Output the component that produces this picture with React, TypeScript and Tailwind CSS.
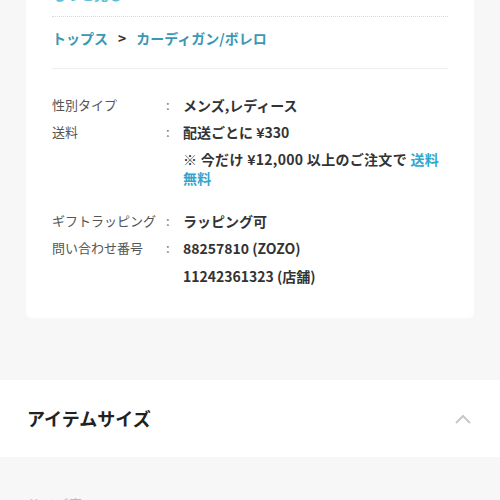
import React from "react";

const font = { fontFamily: '"Noto Sans CJK JP", "Noto Sans", sans-serif' };

function Row({ label, children, className = "" }: { label: string; children: React.ReactNode; className?: string }) {
  return (
    <div className={`flex ${className}`}>
      <div className="w-[114px] shrink-0 text-[13px] leading-[20px] text-[#555]">{label}</div>
      <div className="w-[17px] shrink-0 text-[13px] leading-[20px] text-[#777]">:</div>
      <div className="flex-1 text-[14px] font-bold leading-[20px] text-[#333]">{children}</div>
    </div>
  );
}

export default function App() {
  return (
    <div className="h-[500px] w-[500px] overflow-hidden bg-[#f7f7f7]" style={font}>
      <div className="mx-[26px] rounded-b-md bg-white px-[26px] pb-[32px]">
        <div className="-mt-[14px] h-[16px] text-[14px] font-bold leading-[16px] text-[#5fc0d8]">もっと見る</div>
        <div className="mt-[14px] border-t border-dotted border-[#d8d8d8]" />
        <div className="flex items-center pt-[11px] text-[14px] font-bold leading-[20px]">
          <span className="text-[#3b98b5]">トップス</span>
          <span className="mx-[10px] text-[#333]">&gt;</span>
          <span className="text-[#3b98b5]">カーディガン/ボレロ</span>
        </div>
        <div className="mt-[20px] border-t border-[#eeeeee]" />
        <div className="pt-[26px]">
          <Row label="性別タイプ">メンズ,レディース</Row>
          <Row label="送料" className="mt-[7px]">
            <div>配送ごとに ¥330</div>
            <div className="mt-[8px] text-[14px] font-semibold leading-[19px] tracking-[0.3px] text-[#333]">
              ※ 今だけ ¥12,000 以上のご注文で <span className="text-[#33a6cc]">送料無料</span>
            </div>
          </Row>
          <Row label="ギフトラッピング" className="mt-[23px]">ラッピング可</Row>
          <Row label="問い合わせ番号" className="mt-[7px]">
            <div>88257810 (ZOZO)</div>
            <div className="mt-[8px]">11242361323 (店舗)</div>
          </Row>
        </div>
      </div>
      <div className="mt-[62px] flex h-[77px] items-center justify-between bg-white pl-[27px] pr-[28px]">
        <span className="text-[18px] font-bold text-[#222]">アイテムサイズ</span>
        <svg width="18" height="12" viewBox="0 0 18 12" fill="none">
          <path d="M2 10 L9 3 L16 10" stroke="#c8c8c8" strokeWidth="2" />
        </svg>
      </div>
      <div className="mt-[39px] pl-[27px] text-[14px] leading-[16px] text-[#bbb]">サイズ表</div>
    </div>
  );
}
